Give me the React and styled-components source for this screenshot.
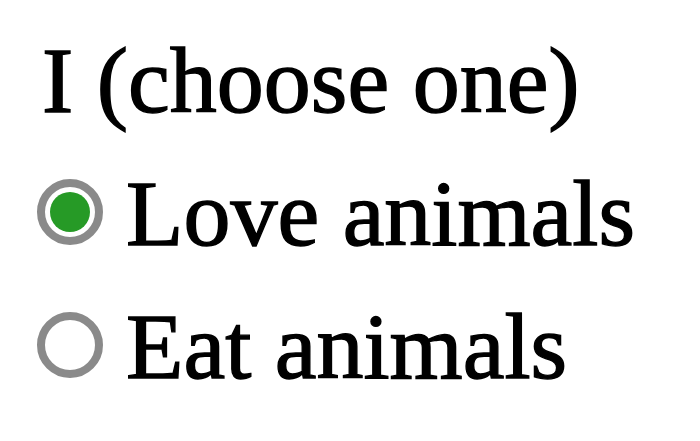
import React, { useState } from "react";
import styled, { createGlobalStyle } from "styled-components";

const GlobalStyle = createGlobalStyle`
  html, body {
    margin: 0;
    padding: 0;
    background: #ffffff;
  }
`;

const Form = styled.fieldset`
  border: 0;
  margin: 0;
  padding: 14px 0 0 37px;
  font-family: "Liberation Serif", "Times New Roman", serif;
  font-size: 94px;
  line-height: 133px;
  color: #000;
  -webkit-text-stroke: 1.4px #000;
`;

const Legend = styled.legend`
  padding: 0 0 0 5px;
  float: left;
  width: 100%;
  white-space: nowrap;
`;

const Option = styled.label`
  display: flex;
  align-items: center;
  gap: 23px;
  clear: both;
  white-space: nowrap;
  cursor: pointer;
`;

const Radio = styled.input.attrs({ type: "radio" })`
  appearance: none;
  flex: none;
  box-sizing: border-box;
  width: 66px;
  height: 66px;
  margin: 0 0 3px 0;
  border: 8px solid #8a8a8a;
  border-radius: 50%;
  background: #fff;
  display: grid;
  place-items: center;
  cursor: pointer;

  &::after {
    content: "";
    width: 40px;
    height: 40px;
    border-radius: 50%;
    background: ${(p) => (p.checked ? "#269a26" : "transparent")};
  }
`;

export default function App() {
  const [choice, setChoice] = useState("love");

  return (
    <>
      <GlobalStyle />
      <Form>
        <Legend>I (choose one)</Legend>
        <Option>
          <Radio
            name="animals"
            checked={choice === "love"}
            onChange={() => setChoice("love")}
          />
          Love animals
        </Option>
        <Option>
          <Radio
            name="animals"
            checked={choice === "eat"}
            onChange={() => setChoice("eat")}
          />
          Eat animals
        </Option>
      </Form>
    </>
  );
}
